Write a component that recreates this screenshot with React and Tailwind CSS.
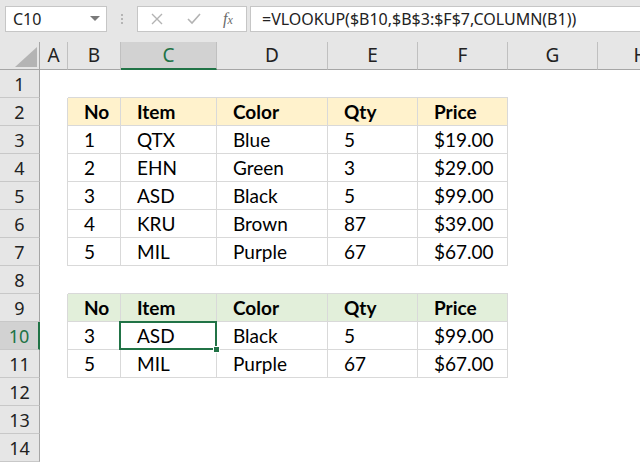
import React from "react";

const cols = [
  { k: "A", w: "w-[28px]" },
  { k: "B", w: "w-[53px]" },
  { k: "C", w: "w-[96px]" },
  { k: "D", w: "w-[111px]" },
  { k: "E", w: "w-[90px]" },
  { k: "F", w: "w-[90px]" },
  { k: "G", w: "w-[90px]" },
  { k: "H", w: "w-[86px]" },
];

const t1 = [
  ["1", "QTX", "Blue", "5", "$19.00"],
  ["2", "EHN", "Green", "3", "$29.00"],
  ["3", "ASD", "Black", "5", "$99.00"],
  ["4", "KRU", "Brown", "87", "$39.00"],
  ["5", "MIL", "Purple", "67", "$67.00"],
];
const t2 = [
  ["3", "ASD", "Black", "5", "$99.00"],
  ["5", "MIL", "Purple", "67", "$67.00"],
];
const hdr = ["No", "Item", "Color", "Qty", "Price"];

function buildRows() {
  const rows = [];
  rows.push({ n: 1, kind: "topEdge" });
  rows.push({ n: 2, kind: "head", bg: "bg-[#fff2cc]", data: hdr });
  t1.forEach((d, i) => rows.push({ n: 3 + i, kind: "data", data: d }));
  rows.push({ n: 8, kind: "topEdge" });
  rows.push({ n: 9, kind: "head", bg: "bg-[#e2efda]", data: hdr });
  t2.forEach((d, i) => rows.push({ n: 10 + i, kind: "data", data: d }));
  rows.push({ n: 12, kind: "empty" });
  rows.push({ n: 13, kind: "empty" });
  rows.push({ n: 14, kind: "empty" });
  return rows;
}

function Row({ r }) {
  const sel = r.n === 10;
  const inTable = r.kind === "head" || r.kind === "data";
  return (
    <div className={"flex h-[28px] relative " + (sel ? "z-10" : "")}>
      <div
        className={
          "w-[40px] shrink-0 h-[28px] border-b border-[#c8c8c8] flex items-center justify-center text-[18px] " +
          (sel
            ? "bg-[#d2d2d2] text-[#217346] border-r-2 border-r-[#217346]"
            : "bg-[#e6e6e6] text-[#222] border-r border-r-[#a6a6a6]")
        }
        style={{ fontFamily: "'Noto Sans', 'Open Sans', sans-serif" }}
      >
        {r.n}
      </div>
      {cols.map((c, ci) => {
        let cls = c.w + " shrink-0 h-[28px] relative flex items-center";
        let content = null;
        if (ci === 0 && inTable) cls += " border-r border-[#d9d9d9]";
        if (ci >= 1 && ci <= 5) {
          if (inTable) {
            cls += " border-r border-b border-[#d9d9d9] pl-[16px]";
            if (r.kind === "head") cls += " font-bold " + r.bg;
            content = r.data[ci - 1];
          } else if (r.kind === "topEdge") {
            cls += " border-b border-[#d9d9d9]";
          }
        }
        return (
          <div key={c.k} className={cls}>
            {content}
            {sel && ci === 2 && (
              <div className="absolute left-[-2px] top-[-1px] w-[98px] h-[29px] border-2 border-[#217346] z-10">
                <div className="absolute right-[-5px] bottom-[-5px] w-[7px] h-[7px] bg-[#217346] border border-white" />
              </div>
            )}
          </div>
        );
      })}
    </div>
  );
}

export default function App() {
  const rows = buildRows();
  return (
    <div className="w-[640px] h-[462px] overflow-hidden bg-white text-black">
      <div
        className="h-[42px] bg-[#e6e6e6] flex items-start pt-[6px] relative"
        style={{ fontFamily: "'Noto Sans', 'Open Sans', sans-serif" }}
      >
        <div className="ml-[5px] w-[102px] h-[26px] bg-white border border-[#c6c6c6] flex items-center justify-between pl-[7px] pr-[6px] text-[16px] text-[#222]">
          <span>C10</span>
          <svg width="10" height="6" viewBox="0 0 10 6">
            <path d="M0 0 L10 0 L5 5 Z" fill="#7a7a7a" />
          </svg>
        </div>
        <div className="w-[30px] h-[26px] flex flex-col items-center justify-center gap-[2px]">
          <div className="w-[2px] h-[2px] bg-[#b5b5b5]" />
          <div className="w-[2px] h-[2px] bg-[#b5b5b5]" />
          <div className="w-[2px] h-[2px] bg-[#b5b5b5]" />
        </div>
        <div className="w-[110px] h-[26px] bg-white border border-[#c6c6c6] flex items-center">
          <svg className="ml-[13px]" width="12" height="12" viewBox="0 0 12 12">
            <path d="M1 1 L11 11 M11 1 L1 11" stroke="#b3b3b3" strokeWidth="1.4" />
          </svg>
          <svg className="ml-[24px]" width="14" height="12" viewBox="0 0 14 12">
            <path d="M1 6 L5 10 L13 1" stroke="#b3b3b3" strokeWidth="1.6" fill="none" />
          </svg>
          <span
            className="ml-[22px] text-[16px] italic text-[#6a6a6a]"
            style={{ fontFamily: "'Liberation Serif', serif" }}
          >
            f<span className="text-[12px]">x</span>
          </span>
        </div>
        <div className="ml-[3px] flex-1 h-[26px] bg-white border border-[#c6c6c6] border-r-0 flex items-center pl-[11px] text-[16px] text-[#222] whitespace-nowrap">
          =VLOOKUP($B10,$B$3:$F$7,COLUMN(B1))
        </div>
      </div>
      <div
        className="flex h-[28px] bg-[#e6e6e6]"
        style={{ fontFamily: "'Noto Sans', 'Open Sans', sans-serif" }}
      >
        <div className="w-[40px] shrink-0 h-[28px] border-r border-b border-[#a6a6a6] relative">
          <svg className="absolute left-[15px] top-[5px]" width="22" height="20" viewBox="0 0 22 20">
            <path d="M22 0 L22 20 L0 20 Z" fill="#b4b4b4" />
          </svg>
        </div>
        {cols.map((c) => {
          const isC = c.k === "C";
          return (
            <div
              key={c.k}
              className={
                c.w +
                " shrink-0 h-[28px] flex items-center justify-center text-[19px] border-r border-r-[#c0c0c0] " +
                (isC
                  ? "bg-[#d2d2d2] text-[#217346] border-b-2 border-b-[#217346]"
                  : "text-[#222] border-b border-b-[#a6a6a6]")
              }
            >
              {c.k}
            </div>
          );
        })}
      </div>
      <div
        className="text-[19px] leading-none"
        style={{ fontFamily: "Lato, 'Open Sans', sans-serif" }}
      >
        {rows.map((r) => (
          <Row key={r.n} r={r} />
        ))}
      </div>
    </div>
  );
}
